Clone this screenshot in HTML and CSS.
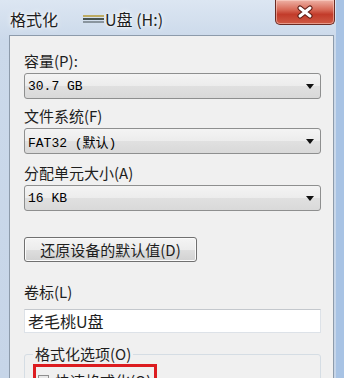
FILE: index.html
```html
<!DOCTYPE html>
<html>
<head>
    <title>格式化 U盘 (H:)</title>
    <link rel="stylesheet" href="styles.css">
</head>
<body>
    <div class="window">
        <div class="titlebar">
            <span class="title">格式化</span>
            <span class="smear"></span>
            <span class="drive">U盘 (H:)</span>
            <div class="close">
                <svg width="20" height="14" viewBox="-10 -7 20 14">
                    <path d="M-5 -4 L5 4 M5 -4 L-5 4" stroke="#5a1a12" stroke-width="5" stroke-linecap="round"/>
                    <path d="M-5 -4 L5 4 M5 -4 L-5 4" stroke="#fff" stroke-width="3" stroke-linecap="round"/>
                </svg>
            </div>
        </div>

        <div class="panel">
            <div class="label first">容量(<u>P</u>):</div>
            <div class="combo"><span>30.7 GB</span><span class="arrow"></span></div>

            <div class="label">文件系统(<u>F</u>)</div>
            <div class="combo"><span>FAT32 (默认)</span><span class="arrow"></span></div>

            <div class="label label3">分配单元大小(<u>A</u>)</div>
            <div class="combo"><span>16 KB</span><span class="arrow"></span></div>

            <div class="button">还原设备的默认值(<u>D</u>)</div>

            <div class="label label4">卷标(<u>L</u>)</div>
            <div class="textbox">老毛桃U盘</div>

            <fieldset class="group">
                <legend>格式化选项(<u>O</u>)</legend>
                <div class="highlight">
                    <span class="check"></span>
                    <span>快速格式化(<u>Q</u>)</span>
                </div>
            </fieldset>
        </div>
    </div>
</body>
</html>
```

FILE: styles.css
```css
* {
    box-sizing: border-box;
}
body {
    margin: 0;
    width: 344px;
    height: 378px;
    overflow: hidden;
    font-family: "Noto Sans CJK SC", "Liberation Sans", sans-serif;
    color: #1e1e1e;
}
u {
    text-decoration: none;
}
.window {
    width: 344px;
    height: 378px;
    display: flex;
    flex-direction: column;
    padding-left: 9px;
    padding-right: 2px;
    border-right: 8px solid #a8c3e4;
    background: linear-gradient(#dce6f2, #cbd9ea 40px, #c6d5e8);
}
.titlebar {
    flex-shrink: 0;
    height: 35px;
    display: flex;
    align-items: flex-start;
    margin-left: -9px;
    padding-left: 10px;
}
.title {
    margin-top: 9px;
    font-size: 16px;
    line-height: 20px;
    text-shadow: 0 0 6px #fff, 0 0 3px #fff;
}
.smear {
    margin-top: 15px;
    margin-left: 25px;
    width: 21px;
    height: 8px;
    background: linear-gradient(#b9a24a 0, #b9a24a 2px, transparent 2px, transparent 3px,
        #2e3a34 3px, #2e3a34 5px, transparent 5px, transparent 6px, #7d8890 6px);
    opacity: 0.85;
}
.drive {
    margin-top: 9px;
    margin-left: 1px;
    font-size: 16px;
    line-height: 20px;
    text-shadow: 0 0 6px #fff, 0 0 3px #fff;
}
.close {
    margin-left: auto;
    margin-right: -1px;
    width: 60px;
    height: 25px;
    border: 1px solid #6a2a22;
    border-top: none;
    border-radius: 0 0 5px 5px;
    background: linear-gradient(#eeb2a6, #d86a58 40%, #c23b2a 60%, #cf5a45);
    box-shadow: inset 0 0 0 1px rgba(255, 220, 210, 0.5);
    display: flex;
    align-items: center;
    justify-content: center;
}
.panel {
    flex: 1;
    min-height: 0;
    overflow: hidden;
    display: flex;
    flex-direction: column;
    align-items: flex-start;
    background: #f0f0f0;
    border: 1px solid #8d9bab;
    border-bottom: none;
    padding: 15px 12px 0 14px;
}
.label {
    flex-shrink: 0;
    font-size: 15px;
    line-height: 20px;
    height: 20px;
    margin-top: 7px;
    margin-bottom: 2px;
}
.label.first {
    margin-top: 0;
}
.label3 {
    margin-top: 9px;
}
.label4 {
    margin-top: 20px;
    margin-bottom: 7px;
}
.combo {
    flex-shrink: 0;
    width: 100%;
    height: 26px;
    border: 1px solid #8e8f8f;
    border-radius: 3px;
    background: linear-gradient(#f4f4f4, #ececec 50%, #e0e0e0 51%, #d9d9d9);
    display: flex;
    align-items: center;
    justify-content: space-between;
    padding: 0 6px 0 3px;
    font-family: "Liberation Mono", "Noto Sans CJK SC", monospace;
    font-size: 13px;
    color: #000;
}
.arrow {
    width: 0;
    height: 0;
    border-left: 4px solid transparent;
    border-right: 4px solid transparent;
    border-top: 5px solid #111;
}
.button {
    flex-shrink: 0;
    margin-top: 26px;
    width: 173px;
    height: 25px;
    border: 1px solid #707070;
    border-radius: 3px;
    background: linear-gradient(#f4f4f4, #ececec 50%, #dedede 51%, #d2d2d2);
    box-shadow: inset 0 0 0 1px #fbfbfb;
    font-size: 15px;
    line-height: 23px;
    text-align: center;
}
.textbox {
    flex-shrink: 0;
    width: 100%;
    height: 24px;
    background: #fff;
    border: 1px solid #dde2e8;
    border-top-color: #c4c8cd;
    padding-left: 3px;
    font-size: 16px;
    line-height: 22px;
}
.group {
    flex-shrink: 0;
    margin: 11px 0 0;
    width: 100%;
    height: 80px;
    border: 1px solid #d5dde4;
    border-radius: 3px;
    padding: 0 8px;
    min-width: 0;
}
.group legend {
    padding: 0 2px;
    font-size: 15px;
    line-height: 20px;
}
.highlight {
    width: 124px;
    height: 30px;
    border: 3px solid #dc1c20;
    display: flex;
    align-items: flex-start;
    gap: 6px;
    padding: 4px 0 0 2px;
    font-size: 15px;
    line-height: 20px;
}
.check {
    margin-top: 4px;
    width: 11px;
    height: 11px;
    border: 1px solid #8f8f8f;
    background: linear-gradient(#e6e6e6, #fafafa);
}
```
